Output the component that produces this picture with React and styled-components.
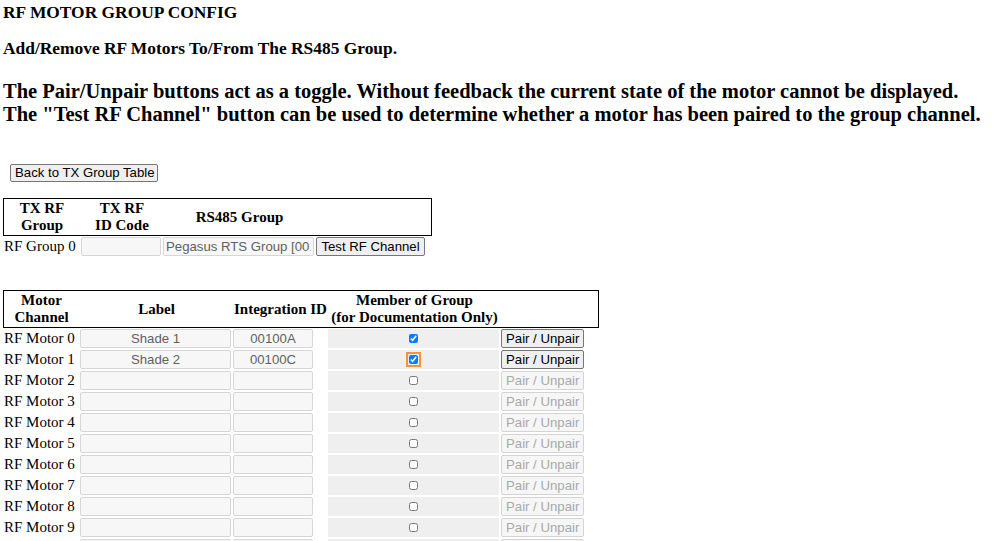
import React from 'react';
import styled, { createGlobalStyle } from 'styled-components';

const GlobalStyle = createGlobalStyle`
  html, body {
    margin: 0;
    padding: 0;
    overflow: hidden;
    background: #fff;
  }
  body {
    font-family: "Liberation Serif", "Times New Roman", serif;
    font-size: 15px;
    color: #000;
  }
`;

const Page = styled.div`
  padding: 0 3px;
`;

const Title = styled.div`
  font-weight: bold;
  font-size: 17.4px;
  line-height: 24px;
`;

const Subtitle = styled.div`
  font-weight: bold;
  font-size: 17.4px;
  line-height: 20px;
  margin-top: 14px;
`;

const Note = styled.div`
  font-weight: bold;
  font-size: 20.5px;
  line-height: 23px;
  margin-top: 22px;
  white-space: nowrap;
`;

const Button = styled.button`
  font-family: "Liberation Sans", Arial, sans-serif;
  font-size: 13.2px;
  height: ${p => p.$h || 19}px;
  padding: 0 4px;
  background: ${p => (p.disabled ? '#f6f6f6' : '#efefef')};
  color: ${p => (p.disabled ? '#a9a9a9' : '#000')};
  border: 1px solid ${p => (p.disabled ? '#d4d4d4' : '#767676')};
  border-radius: 2px;
  white-space: nowrap;
  line-height: 1;
`;

const BackButton = styled(Button)`
  margin: 38px 0 0 7px;
  width: 148px;
`;

const Table = styled.div`
  margin-top: ${p => p.$mt}px;
  width: ${p => p.$w}px;
`;

const HeadBox = styled.div`
  border: 1px solid #000;
  height: 36px;
  display: grid;
  grid-template-columns: ${p => p.$cols};
  column-gap: 2px;
  align-items: center;
`;

const HeadCell = styled.div`
  font-weight: bold;
  font-size: 15px;
  line-height: 17px;
  text-align: center;
`;

const Row = styled.div`
  display: grid;
  grid-template-columns: ${p => p.$cols};
  column-gap: 2px;
  height: 21px;
  align-items: center;
`;

const RowLabel = styled.div`
  font-size: 15px;
  padding-left: 1px;
  white-space: nowrap;
`;

const Field = styled.input`
  box-sizing: border-box;
  width: ${p => p.$w}px;
  height: 19px;
  border: 1px solid #d6d6d6;
  border-radius: 2px;
  background: #f7f7f7;
  color: #5f5f5f;
  font-family: "Liberation Sans", Arial, sans-serif;
  font-size: 13.2px;
  text-align: ${p => p.$align || 'center'};
  padding: 0 2px;
  margin: 0;
`;

const CheckCell = styled.div`
  background: #efefef;
  height: 19px;
  display: flex;
  align-items: center;
  justify-content: center;
`;

const Check = styled.input`
  width: 9px;
  height: 9px;
  margin: 0;
  accent-color: #0a7aff;
  ${p => p.$focus && `outline: 2px solid #f0953a; outline-offset: 1px; border-radius: 2px;`}
`;

const groupCols = '76px 80px 151px 109px';
const motorCols = '75px 151px 93px 171px 83px';

const motors = [
  { label: 'Shade 1', id: '00100A', checked: true, active: true },
  { label: 'Shade 2', id: '00100C', checked: true, active: true, focus: true },
];
for (let i = 2; i < 12; i++) motors.push({ label: '', id: '', checked: false, active: false });

export default function App() {
  return (
    <Page>
      <GlobalStyle />
      <Title>RF MOTOR GROUP CONFIG</Title>
      <Subtitle>Add/Remove RF Motors To/From The RS485 Group.</Subtitle>
      <Note>
        The Pair/Unpair buttons act as a toggle. Without feedback the current state of the motor cannot be displayed.
        <br />
        The "Test RF Channel" button can be used to determine whether a motor has been paired to the group channel.
      </Note>
      <BackButton $h={18}>Back to TX Group Table</BackButton>

      <Table $mt={16} $w={429}>
        <HeadBox $cols={groupCols}>
          <HeadCell>TX RF<br />Group</HeadCell>
          <HeadCell>TX RF<br />ID Code</HeadCell>
          <HeadCell>RS485 Group</HeadCell>
          <HeadCell />
        </HeadBox>
        <Row $cols={groupCols}>
          <RowLabel>RF Group 0</RowLabel>
          <Field $w={80} readOnly value="" />
          <Field $w={151} $align="left" readOnly value="Pegasus RTS Group [001]" />
          <Button>Test RF Channel</Button>
        </Row>
      </Table>

      <Table $mt={33} $w={596}>
        <HeadBox $cols={motorCols}>
          <HeadCell>Motor<br />Channel</HeadCell>
          <HeadCell>Label</HeadCell>
          <HeadCell>Integration ID</HeadCell>
          <HeadCell>Member of Group<br />(for Documentation Only)</HeadCell>
          <HeadCell />
        </HeadBox>
        {motors.map((m, i) => (
          <Row key={i} $cols={motorCols}>
            <RowLabel>RF Motor {i}</RowLabel>
            <Field $w={151} readOnly value={m.label} />
            <Field $w={80} readOnly value={m.id} />
            <CheckCell>
              <Check type="checkbox" checked={m.checked} readOnly $focus={m.focus} />
            </CheckCell>
            <Button disabled={!m.active}>Pair / Unpair</Button>
          </Row>
        ))}
      </Table>
    </Page>
  );
}
